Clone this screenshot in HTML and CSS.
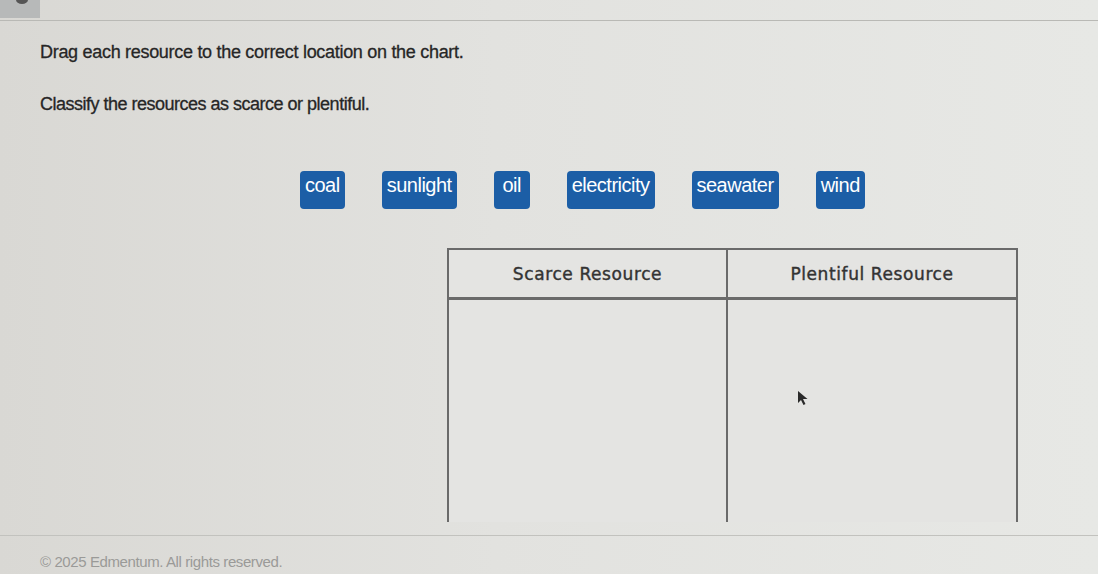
FILE: index.html
```html
<!DOCTYPE html>
<html lang="en">
<head>
    <meta charset="UTF-8">
    <meta name="viewport" content="width=device-width, initial-scale=1.0">
    <title>Scarce or Plentiful</title>
    <link rel="stylesheet" href="styles.css">
</head>
<body>
    <div class="topbar">
        <div class="tab"><span class="tab-dot"></span></div>
    </div>
    <div class="content">
        <p class="prompt">Drag each resource to the correct location on the chart.</p>
        <p class="prompt second">Classify the resources as scarce or plentiful.</p>

        <div class="tiles">
            <div class="tile">coal</div>
            <div class="tile">sunlight</div>
            <div class="tile">oil</div>
            <div class="tile">electricity</div>
            <div class="tile">seawater</div>
            <div class="tile">wind</div>
        </div>

        <table class="chart">
            <thead>
                <tr>
                    <th class="col-scarce">Scarce Resource</th>
                    <th class="col-plenty">Plentiful Resource</th>
                </tr>
            </thead>
            <tbody>
                <tr>
                    <td></td>
                    <td></td>
                </tr>
            </tbody>
        </table>
    </div>
    <div class="footer">&copy; 2025 Edmentum. All rights reserved.</div>

    <svg class="cursor" width="12" height="16" viewBox="0 0 12 16">
        <path d="M1 1 L1 13 L4 10 L6.5 15 L8.5 14 L6 9 L10.5 9 Z" fill="#2a2a2a"/>
    </svg>
</body>
</html>
```

FILE: styles.css
```css
body {
    margin: 0;
    font-family: "Liberation Sans", Arial, sans-serif;
    background: linear-gradient(90deg, #d9d8d4 0%, #e2e2df 45%, #e7e8e5 100%);
    color: #222;
    height: 574px;
    overflow: hidden;
    position: relative;
}
.topbar {
    height: 20px;
    border-bottom: 1px solid #b9b9b5;
}
.tab {
    width: 40px;
    height: 18px;
    background-color: #b7b9b9;
    overflow: hidden;
}
.tab-dot {
    display: block;
    width: 12px;
    height: 8px;
    margin: -4px 0 0 16px;
    border-radius: 50%;
    background-color: #555;
}
.content {
    padding-left: 40px;
    height: 514px;
}
.prompt {
    margin: 0;
    padding-top: 21px;
    font-size: 18px;
    letter-spacing: -0.3px;
    color: #262626;
    -webkit-text-stroke: 0.3px #262626;
}
.prompt.second {
    padding-top: 31px;
    letter-spacing: -0.5px;
}
.tiles {
    display: flex;
    gap: 37px;
    margin-top: 56px;
    padding-left: 260px;
}
.tile {
    min-width: 26px;
    text-align: center;
    background-color: #1c5ea6;
    color: #fff;
    font-size: 20px;
    letter-spacing: -0.5px;
    padding: 3px 5px 13px;
    border-radius: 4px;
    line-height: 22px;
}
.chart {
    margin-left: 407px;
    margin-top: 39px;
    border-collapse: collapse;
    font-family: "DejaVu Sans", sans-serif;
    background-color: #e4e4e2;
}
.chart th {
    height: 45px;
    font-size: 17px;
    font-weight: normal;
    color: #333;
    letter-spacing: 0.6px;
    border: 2px solid #6a6a6a;
    border-bottom-width: 3px;
    -webkit-text-stroke: 0.4px #333;
}
.col-scarce {
    width: 275px;
}
.col-plenty {
    width: 286px;
}
.chart td {
    height: 220px;
    border-left: 2px solid #6a6a6a;
    border-right: 2px solid #6a6a6a;
}
.footer {
    border-top: 1px solid #c2c2be;
    padding: 17px 0 0 40px;
    font-size: 15px;
    letter-spacing: -0.4px;
    color: #9a9a98;
}
.cursor {
    position: absolute;
    left: 797px;
    top: 390px;
}
```
